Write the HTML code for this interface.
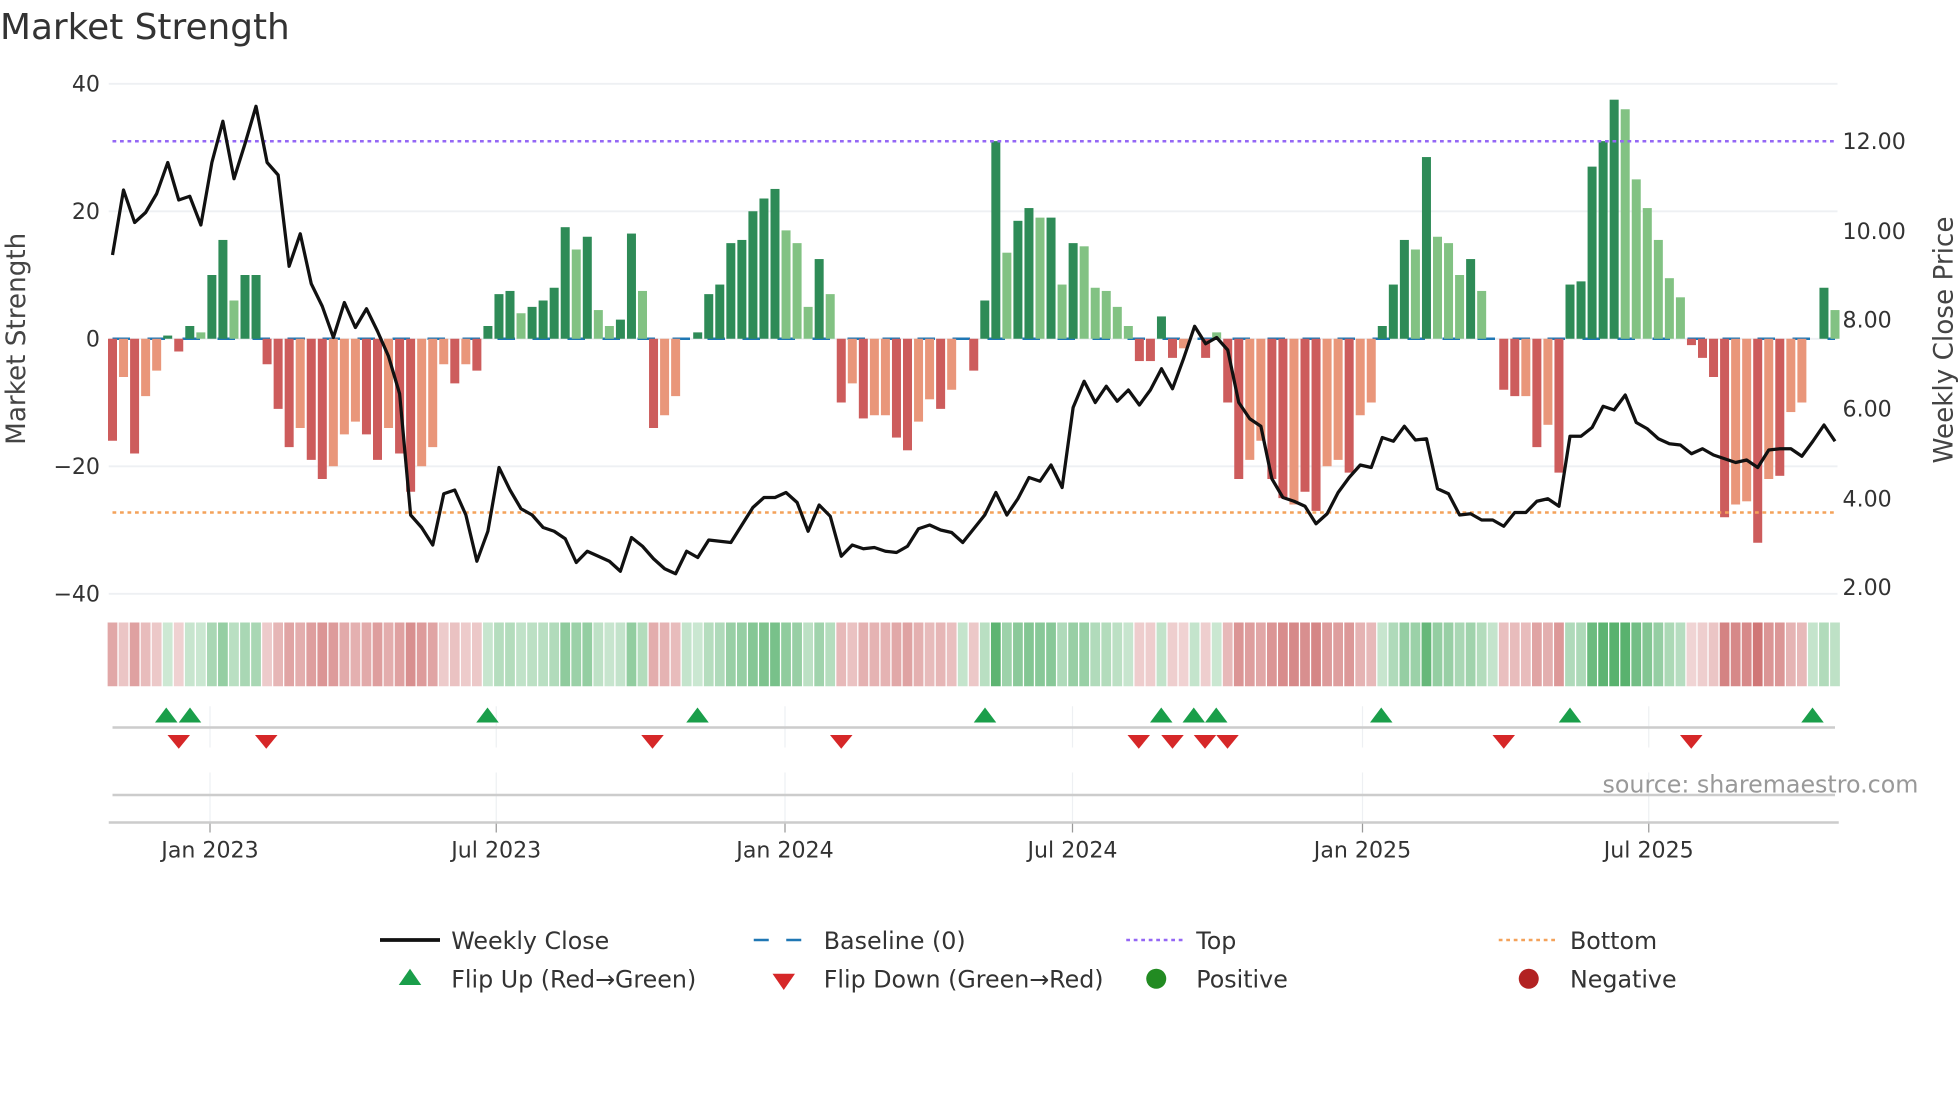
<!DOCTYPE html>
<html><head><meta charset="utf-8">
<style>
html,body{margin:0;padding:0;background:#fff;}
svg{display:block;font-family:"DejaVu Sans","Liberation Sans",sans-serif;}
</style></head>
<body>
<svg id="c" width="1960" height="1102" viewBox="0 0 1568 881.6" xmlns="http://www.w3.org/2000/svg">
<rect width="1568" height="882" fill="#fff"/>
<text x="0" y="31" font-size="28.7" fill="#333">Market Strength</text>
<g id="grid"></g>
<g id="bars"></g>
<g id="fg"></g>
<text x="1282" y="634" font-size="19" fill="#999">source: sharemaestro.com</text>
<text transform="translate(20,271) rotate(-90)" text-anchor="middle" font-size="21" fill="#444">Market Strength</text>
<text transform="translate(1562,272) rotate(-90)" text-anchor="middle" font-size="21" fill="#444">Weekly Close Price</text>
<g font-size="19" fill="#333">
<line x1="304" y1="752" x2="352" y2="752" stroke="#111" stroke-width="3"/>
<text x="361" y="759">Weekly Close</text>
<line x1="603" y1="752" x2="651" y2="752" stroke="#1f77b4" stroke-width="2" stroke-dasharray="12,14"/>
<text x="659" y="759">Baseline (0)</text>
<line x1="901" y1="752" x2="946" y2="752" stroke="#9467f5" stroke-width="2" stroke-dasharray="3,3"/>
<text x="957" y="759">Top</text>
<line x1="1199" y1="752" x2="1244" y2="752" stroke="#f4a25a" stroke-width="2" stroke-dasharray="3,3"/>
<text x="1256" y="759">Bottom</text>
<polygon points="328,775 319,788 337,788" fill="#1a9e4a"/>
<text x="361" y="790">Flip Up (Red→Green)</text>
<polygon points="618,779 636,779 627,792" fill="#d62728"/>
<text x="659" y="790">Flip Down (Green→Red)</text>
<circle cx="925" cy="783" r="8" fill="#228b22"/>
<text x="957" y="790">Positive</text>
<circle cx="1223" cy="783" r="8" fill="#b22222"/>
<text x="1256" y="790">Negative</text>
</g>
</svg>
<script>
var NS="http://www.w3.org/2000/svg";
function el(p,t,a,txt){var e=document.createElementNS(NS,t);for(var k in a)e.setAttribute(k,a[k]);if(txt!=null)e.textContent=txt;document.getElementById(p).appendChild(e);return e;}
var V="-16d -6l -18d -9l -5l 0.5d -2d 2d 1l 10d 15.5d 6l 10d 10d -4d -11d -17d -14l -19d -22d -20l -15l -13l -15d -19d -14l -18d -24d -20l -17l -4l -7d -4l -5d 2d 7d 7.5d 4l 5d 6d 8d 17.5d 14l 16d 4.5l 2l 3d 16.5d 7.5l -14d -12l -9l 0d 1d 7d 8.5d 15d 15.5d 20d 22d 23.5d 17l 15l 5l 12.5d 7l -10d -7l -12.5d -12l -12l -15.5d -17.5d -13l -9.5l -11d -8l 0d -5d 6d 31d 13.5l 18.5d 20.5d 19l 19d 8.5l 15d 14.5l 8l 7.5l 5l 2l -3.5d -3.5d 3.5d -3d -1.5l 0d -3d 1l -10d -22d -19l -16l -22d -25d -26l -24d -27d -20l -19l -21d -12l -10l 2d 8.5d 15.5d 14l 28.5d 16l 15l 10l 12.5d 7.5l 0d -8d -9d -9l -17d -13.5l -21d 8.5d 9d 27d 31d 37.5d 36l 25l 20.5l 15.5l 9.5l 6.5l -1d -3d -6d -28d -26l -25.5l -32d -22l -21.5d -11.5l -10l 0d 8d 4.5l".split(" ");
var P=[204,152,178,170,155,130,160,157,180,130,97,143,115,85,130,140,213,187,227,245,270,242,262,247,265,285,315,412,422,436,395,392,412,449,425,374,392,407,412,422,425,431,450,441,445,449,457,430,437,447,455,459,441,446,432,433,434,420,406,398,398,394,402,425,404,413,445,436,439,438,441,442,437,423,420,424,426,434,423,412,394,412,399,382,385,372,390,326,305,322,309,321,312,324,312,295,311,287,261,275,270,280,322,335,341,383,398,401,405,419,411,394,382,372,374,350,353,341,352,351,391,395,412,411,416,416,421,410,410,401,399,405,349,349,342,325,328,316,338,343,351,355,356,363,359,364,367,370,368,374,360,359,359,365,353,340,353];
var n=V.length, x0=90, st=(1468-90)/(n-1);
function zy(v){return 271-v*5.1;}
[40,20,0,-20,-40].forEach(function(v){el("grid","line",{x1:87,x2:1470,y1:zy(v),y2:zy(v),stroke:"#eef0f3","stroke-width":1.5});
el("grid","text",{x:80,y:zy(v)+6,"text-anchor":"end","font-size":17.7,fill:"#333"},v<0?"\u2212"+(-v):""+v);});
[[113,"12.00"],[185,"10.00"],[256,"8.00"],[327,"6.00"],[399,"4.00"],[470,"2.00"]].forEach(function(a){el("grid","text",{x:1474,y:a[0]+6,"font-size":17.7,fill:"#333"},a[1]);});
var ticks=[[168,"Jan 2023"],[397,"Jul 2023"],[628,"Jan 2024"],[858,"Jul 2024"],[1090,"Jan 2025"],[1319,"Jul 2025"]];
ticks.forEach(function(t){el("grid","line",{x1:t[0],x2:t[0],y1:565,y2:598,stroke:"#eef0f3"});
el("grid","line",{x1:t[0],x2:t[0],y1:618,y2:658,stroke:"#eef0f3"});
el("grid","line",{x1:t[0],x2:t[0],y1:658,y2:666,stroke:"#999"});
el("grid","text",{x:t[0],y:686,"text-anchor":"middle","font-size":17.7,fill:"#333"},t[1]);});
el("grid","line",{x1:90,x2:1468,y1:582,y2:582,stroke:"#ccc","stroke-width":2});
el("grid","line",{x1:90,x2:1468,y1:636,y2:636,stroke:"#ccc","stroke-width":2});
el("grid","line",{x1:87,x2:1471,y1:658,y2:658,stroke:"#ccc","stroke-width":2});
el("bars","line",{x1:90,x2:1468,y1:271,y2:271,stroke:"#1f77b4","stroke-width":2,"stroke-dasharray":"14,14"});
for(var i=0;i<n;i++){
 var s=V[i], v=parseFloat(s), d=s.slice(-1)=="d", x=x0+st*i;
 if(v!=0){var c=v>0?(d?"#2e8b57":"#82c283"):(d?"#cd5c5c":"#e9967a");
 var y1=zy(Math.max(v,0)),y2=zy(Math.min(v,0));
 el("bars","rect",{x:x-3.6,y:y1,width:7.2,height:y2-y1,fill:c});}
 var a=0.25+0.6*Math.min(1,Math.abs(v)/32);
 var hc=v>=0?"rgba(60,165,85,"+(v==0?0.3:a)+")":"rgba(200,95,95,"+a+")";
 el("bars","rect",{x:x-3.9,y:498,width:7.8,height:51,fill:hc});
}
el("fg","line",{x1:90,x2:1468,y1:113,y2:113,stroke:"#9467f5","stroke-width":2,"stroke-dasharray":"3,3"});
el("fg","line",{x1:90,x2:1468,y1:410,y2:410,stroke:"#f4a25a","stroke-width":2,"stroke-dasharray":"3,3"});
var pts=[];for(var i=0;i<P.length;i++){pts.push((x0+st*i).toFixed(1)+","+P[i]);}
el("fg","polyline",{points:pts.join(" "),fill:"none",stroke:"#111","stroke-width":2.6,"stroke-linejoin":"round"});
[133,152,390,558,788,929,955,973,1105,1256,1450].forEach(function(x){el("fg","polygon",{points:(x)+",566 "+(x-9)+",578 "+(x+9)+",578",fill:"#1a9e4a"});});
[143,213,522,673,911,938,964,982,1203,1353].forEach(function(x){el("fg","polygon",{points:(x-9)+",588 "+(x+9)+",588 "+x+",599",fill:"#d62728"});});
</script>
</body></html>
